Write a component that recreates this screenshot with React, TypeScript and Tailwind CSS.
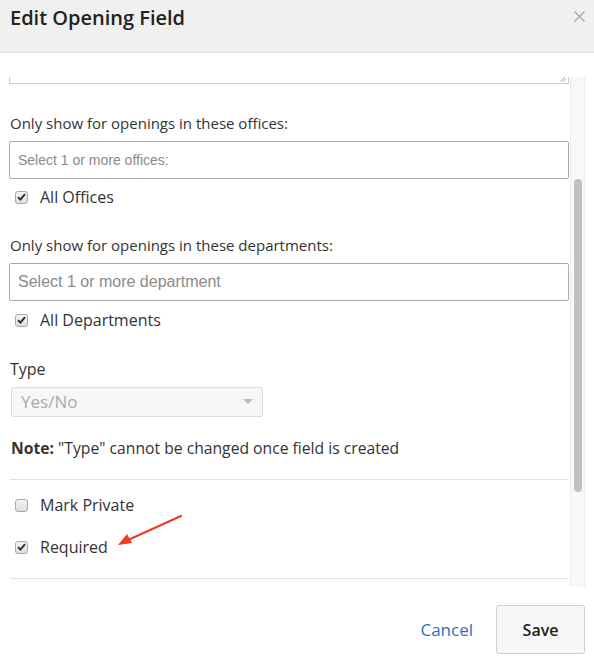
import React from 'react';

const font = { fontFamily: '"Open Sans", "Noto Sans", sans-serif' };

function Check({ checked, label }: { checked: boolean; label: string }) {
  return (
    <div className="flex h-[22px] items-center">
      <span className="ml-[6px] flex h-[13px] w-[13px] items-center justify-center rounded-[3px] border border-[#a8a8a8] bg-gradient-to-b from-[#f4f4f4] to-[#dedede]">
        {checked && (
          <svg width="9" height="8" viewBox="0 0 9 8">
            <path d="M1 4.2 L3.4 6.6 L8 1.2" fill="none" stroke="#2b2b2b" strokeWidth="1.9" />
          </svg>
        )}
      </span>
      <span className="ml-[12px] text-[16px] text-[#333]">{label}</span>
    </div>
  );
}

function MultiSelect({ placeholder, size }: { placeholder: string; size: string }) {
  return (
    <div className="mt-[7px] flex h-[38px] items-center overflow-hidden rounded-[2px] border border-[#aaa] bg-white pl-[8px]">
      <span className={`${size} whitespace-nowrap text-[#8a8a8a]`} style={{ fontFamily: '"Liberation Sans", Arial, sans-serif' }}>
        {placeholder}
      </span>
    </div>
  );
}

export default function App() {
  return (
    <div className="relative flex h-[663px] w-[594px] flex-col overflow-hidden bg-white" style={font}>
      {/* header */}
      <div className="flex h-[53px] shrink-0 items-start justify-between border-b border-[#dcdcdc] bg-[#f0f0f0] pl-[10px] pr-[9px]">
        <h1 className="mt-[4px] text-[20px] font-semibold leading-[28px] text-[#222]">Edit Opening Field</h1>
        <svg className="mt-[11px]" width="11" height="11" viewBox="0 0 11 11">
          <path d="M0.5 0.5 L10.5 10.5 M10.5 0.5 L0.5 10.5" stroke="#a3a3a3" strokeWidth="1.1" />
        </svg>
      </div>

      {/* body */}
      <div className="mt-[24px] flex h-[510px] shrink-0">
        <div className="w-[570px] shrink-0 overflow-hidden pl-[9px] pr-px">
          {/* tail of textarea scrolled out */}
          <div className="relative h-[7px] border-x border-b border-[#ccc]">
            <svg className="absolute right-[2px] bottom-[1px]" width="6" height="6" viewBox="0 0 6 6">
              <path d="M0.5 5.5 L5.5 0.5 M3 5.5 L5.5 3" stroke="#888" strokeWidth="0.8" />
            </svg>
          </div>

          <div className="mt-[28px] pl-px text-[15px] leading-[22px] text-[#333]">Only show for openings in these offices:</div>
          <MultiSelect placeholder="Select 1 or more offices:" size="text-[14px]" />
          <div className="mt-[7px]">
            <Check checked label="All Offices" />
          </div>

          <div className="mt-[26px] pl-px text-[15px] leading-[22px] text-[#333]">Only show for openings in these departments:</div>
          <MultiSelect placeholder="Select 1 or more department" size="text-[16px]" />
          <div className="mt-[8px]">
            <Check checked label="All Departments" />
          </div>

          <div className="mt-[27px] pl-px text-[16px] leading-[22px] text-[#333]">Type</div>
          <div className="mt-[7px] ml-[2px] flex h-[30px] w-[252px] items-center justify-between rounded-[2px] border border-[#ddd] bg-[#f7f7f7] pl-[9px] pr-[9px]">
            <span className="text-[17px] text-[#aaa]">Yes/No</span>
            <svg width="10" height="6" viewBox="0 0 10 6">
              <path d="M0 0 L10 0 L5 5 Z" fill="#bbb" />
            </svg>
          </div>

          <div className="mt-[20px] pl-[2px] text-[15.7px] leading-[22px] text-[#333]">
            <span className="font-bold">Note:</span> "Type" cannot be changed once field is created
          </div>

          <div className="mt-[20px] ml-px border-t border-[#e2e2e2]" />

          <div className="mt-[14px]">
            <Check checked={false} label="Mark Private" />
          </div>
          <div className="mt-[20px]">
            <Check checked label="Required" />
          </div>

          <div className="mt-[20px] ml-px border-t border-[#e2e2e2]" />
        </div>

        {/* scrollbar */}
        <div className="w-[15px] shrink-0 border-x border-[#ececec] bg-[#f8f8f8] pl-[3px] pt-[102px]">
          <div className="h-[313px] w-[8px] rounded-full bg-[#c1c1c1]" />
        </div>
      </div>

      {/* footer */}
      <div className="flex flex-1 items-center justify-end gap-[23px] pr-[9px] pt-[9px]">
        <button className="text-[17px] text-[#2c6fc4]">Cancel</button>
        <button className="h-[49px] w-[89px] rounded-[3px] border border-[#cfcfcf] bg-[#f7f7f7] text-[16px] font-semibold text-[#222]">
          Save
        </button>
      </div>

      {/* annotation arrow */}
      <svg className="pointer-events-none absolute left-0 top-0" width="594" height="663">
        <path d="M181 516 L128 540" stroke="#f03a24" strokeWidth="2.2" strokeLinecap="round" />
        <path d="M118 545 L127 534 L132 543 Z" fill="#f03a24" />
      </svg>
    </div>
  );
}
